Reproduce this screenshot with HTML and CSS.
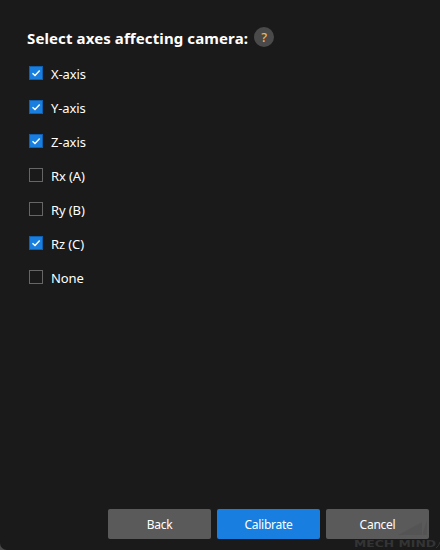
FILE: index.html
```html
<!DOCTYPE html>
<html lang="en">
<head>
    <meta charset="UTF-8">
    <meta name="viewport" content="width=device-width, initial-scale=1.0">
    <title>Select axes</title>
    <link rel="stylesheet" href="styles.css">
</head>
<body>

<div class="dialog">
    <!-- Title with help icon -->
    <div class="title">
        <h1>Select axes affecting camera:</h1>
        <button class="help" type="button">?</button>
    </div>

    <!-- Axis list -->
    <form class="axes">
        <label><input type="checkbox" checked><span>X-axis</span></label>
        <label><input type="checkbox" checked><span>Y-axis</span></label>
        <label><input type="checkbox" checked><span>Z-axis</span></label>
        <label><input type="checkbox"><span>Rx (A)</span></label>
        <label><input type="checkbox"><span>Ry (B)</span></label>
        <label><input type="checkbox" checked><span>Rz (C)</span></label>
        <label><input type="checkbox"><span>None</span></label>
    </form>

    <!-- Buttons -->
    <div class="buttons">
        <button type="button">Back</button>
        <button class="primary" type="button">Calibrate</button>
        <button type="button">Cancel</button>
    </div>

    <!-- Watermark over the corner -->
    <svg class="watermark" width="88" height="34" viewBox="0 0 88 34">
        <path d="M46 19 L70 6 V19 Z M71 16 L75 4 V19 H71 Z" fill="#000" fill-opacity="0.06"/>
        <text x="2" y="31" textLength="82" lengthAdjust="spacingAndGlyphs">MECH MIND</text>
        <path d="M84 32 Q87 30 88 26" fill="none" stroke="#343434"/>
    </svg>
</div>

</body>
</html>
```
FILE: styles.css
```css
body {
    margin: 0;
    background-color: #4a4a4a;
    font-family: "Noto Sans", "Open Sans", sans-serif;
    color: #fff;
}
.dialog {
    position: relative;
    display: flex;
    flex-direction: column;
    box-sizing: border-box;
    height: 550px;
    padding: 27px 11px 11px 27px;
    border-bottom-left-radius: 7px;
    background-color: #1a1a1a;
    overflow: hidden;
}
.title {
    display: flex;
    align-items: flex-start;
    gap: 6px;
    height: 35px;
}
h1 {
    margin: 0;
    font-size: 15px;
    line-height: 22px;
    font-weight: bold;
    letter-spacing: 0.11px;
    white-space: nowrap;
}
.help {
    width: 20px;
    height: 20px;
    padding: 0;
    border: none;
    border-radius: 50%;
    background-color: #4a4a4a;
    color: #e9b949;
    font: 500 13px/20px "Noto Sans", sans-serif;
}
.axes {
    display: flex;
    flex-direction: column;
    gap: 14px;
    padding-left: 2px;
}
.axes label {
    display: flex;
    align-items: flex-start;
    gap: 8px;
    height: 20px;
    font-size: 13px;
    line-height: 24px;
    letter-spacing: -0.1px;
}
.axes input {
    appearance: none;
    width: 14px;
    height: 14px;
    margin: 4px 0 0;
    border: 1px solid #666;
}
.axes input:checked {
    border-color: #1160b0;
    background: #187fe0 url("data:image/svg+xml,%3Csvg xmlns='http://www.w3.org/2000/svg' viewBox='0 0 12 12'%3E%3Cpath d='M2.5 6.2 L5 8.6 L9.7 3.6' fill='none' stroke='white' stroke-width='1.4'/%3E%3C/svg%3E");
}
.buttons {
    display: flex;
    justify-content: flex-end;
    gap: 6px;
    margin-top: auto;
}
.buttons button {
    width: 103px;
    height: 30px;
    padding: 1px 0 0;
    border: none;
    border-radius: 2px;
    background-color: #5a5a5a;
    color: #fff;
    font: 12px/30px "Noto Sans", sans-serif;
    letter-spacing: -0.25px;
}
.buttons .primary {
    background-color: #187fe0;
}
.watermark {
    position: absolute;
    right: 0;
    bottom: 0;
    pointer-events: none;
}
.watermark text {
    fill: #343434;
    font: bold 9px "DejaVu Sans", sans-serif;
}
```
